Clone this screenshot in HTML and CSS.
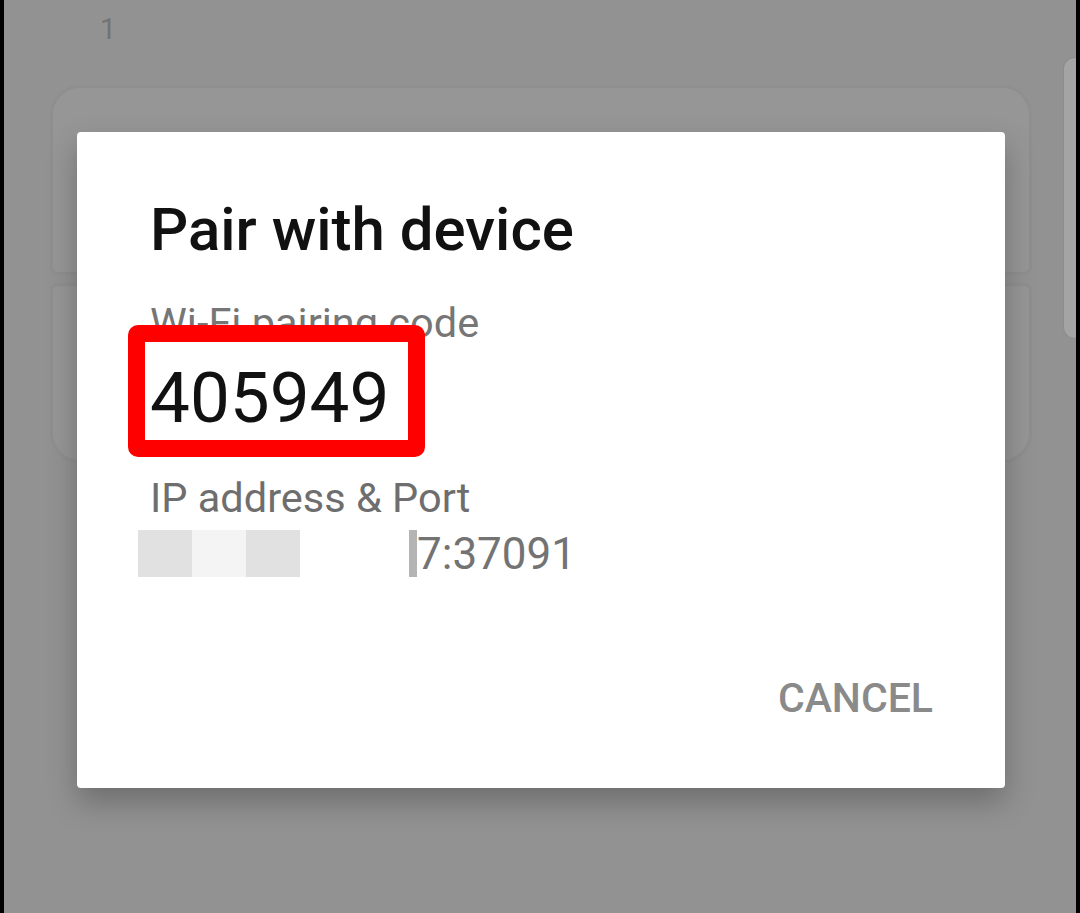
FILE: index.html
```html
<!DOCTYPE html>
<html lang="en">
<head>
    <meta charset="UTF-8">
    <meta name="viewport" content="width=device-width, initial-scale=1.0">
    <title>Pair with device</title>
    <link rel="stylesheet" href="styles.css">
</head>
<body>

    <div class="screen">
        <!-- page behind the dialog (dimmed) -->
        <div class="page-num">1</div>
        <div class="card card-top"></div>
        <div class="card card-mid"></div>
        <div class="scroll-thumb"></div>

        <!-- dialog -->
        <div class="dialog">
            <h2 class="dialog-title">Pair with device</h2>

            <div class="label label-code">Wi-Fi pairing code</div>
            <div class="code-mark"></div>
            <div class="code">405949</div>

            <div class="label label-ip">IP address &amp; Port</div>
            <div class="address">
                <span class="blur blur-a"></span>
                <span class="blur blur-b"></span>
                <span class="blur blur-a"></span>
                <span class="blur-edge"></span>
                <span class="address-text">7:37091</span>
            </div>

            <div class="dialog-actions">
                <button class="btn-cancel">CANCEL</button>
            </div>
        </div>
    </div>

</body>
</html>
```

FILE: styles.css
```css
body { margin: 0; background: #000; font-family: Roboto, "Liberation Sans", Arial, sans-serif; overflow: hidden; }
.screen { position: relative; margin: 0 4px; height: 913px; background: #929292; overflow: hidden; }

.page-num { padding: 12px 0 0 96px; height: 40px; font-size: 29px; color: #737373; }
.card { margin-left: 46px; width: 982px; background: #969696; border: 3px solid #8f8f8f; box-sizing: border-box; }
.card-top { margin-top: 33px; height: 190px; border-radius: 30px 30px 8px 8px; }
.card-mid { margin-top: 8px; height: 180px; border-radius: 8px 8px 30px 30px; }
.scroll-thumb { position: absolute; top: 57px; right: 0; width: 12px; height: 280px; background: #a4a4a4; border: 1px solid #8c8c8c; border-right: none; border-radius: 12px 0 0 12px; }

.dialog { position: absolute; left: 73px; top: 132px; width: 928px; height: 656px; box-sizing: border-box; padding: 64px 72px 0 73px; background: #fff; border-radius: 4px; box-shadow: 0 14px 30px rgba(0, 0, 0, 0.25); }
.dialog-title { margin: 0; font-size: 60px; line-height: 68px; font-weight: 500; color: #111; }

.label { font-size: 41.5px; line-height: 48px; color: #767676; }
.label-code { margin-top: 35px; }
.label-ip { margin-top: 34px; color: #6e6e6e; }

.code-mark { position: absolute; left: 51px; top: 193px; width: 297px; height: 132px; box-sizing: border-box; border: 17px solid #f00; border-radius: 10px; background: #fff; }
.code { position: relative; z-index: 1; margin-top: 9px; font-size: 71px; line-height: 84px; color: #111; }

.address { display: flex; height: 47px; margin: 8px 0 0 -12px; }
.blur { width: 54px; }
.blur-a { background: #e1e1e1; }
.blur-b { background: #f4f4f4; }
.blur-edge { width: 8px; margin-left: 109px; background: #b4b4b4; }
.address-text { font-size: 44px; line-height: 48px; color: #737373; }

.dialog-actions { display: flex; justify-content: flex-end; margin-top: 97px; }
.btn-cancel { padding: 0; border: none; background: none; font-family: inherit; font-size: 41px; line-height: 48px; font-weight: 500; color: #8a8a8a; cursor: pointer; }
```
